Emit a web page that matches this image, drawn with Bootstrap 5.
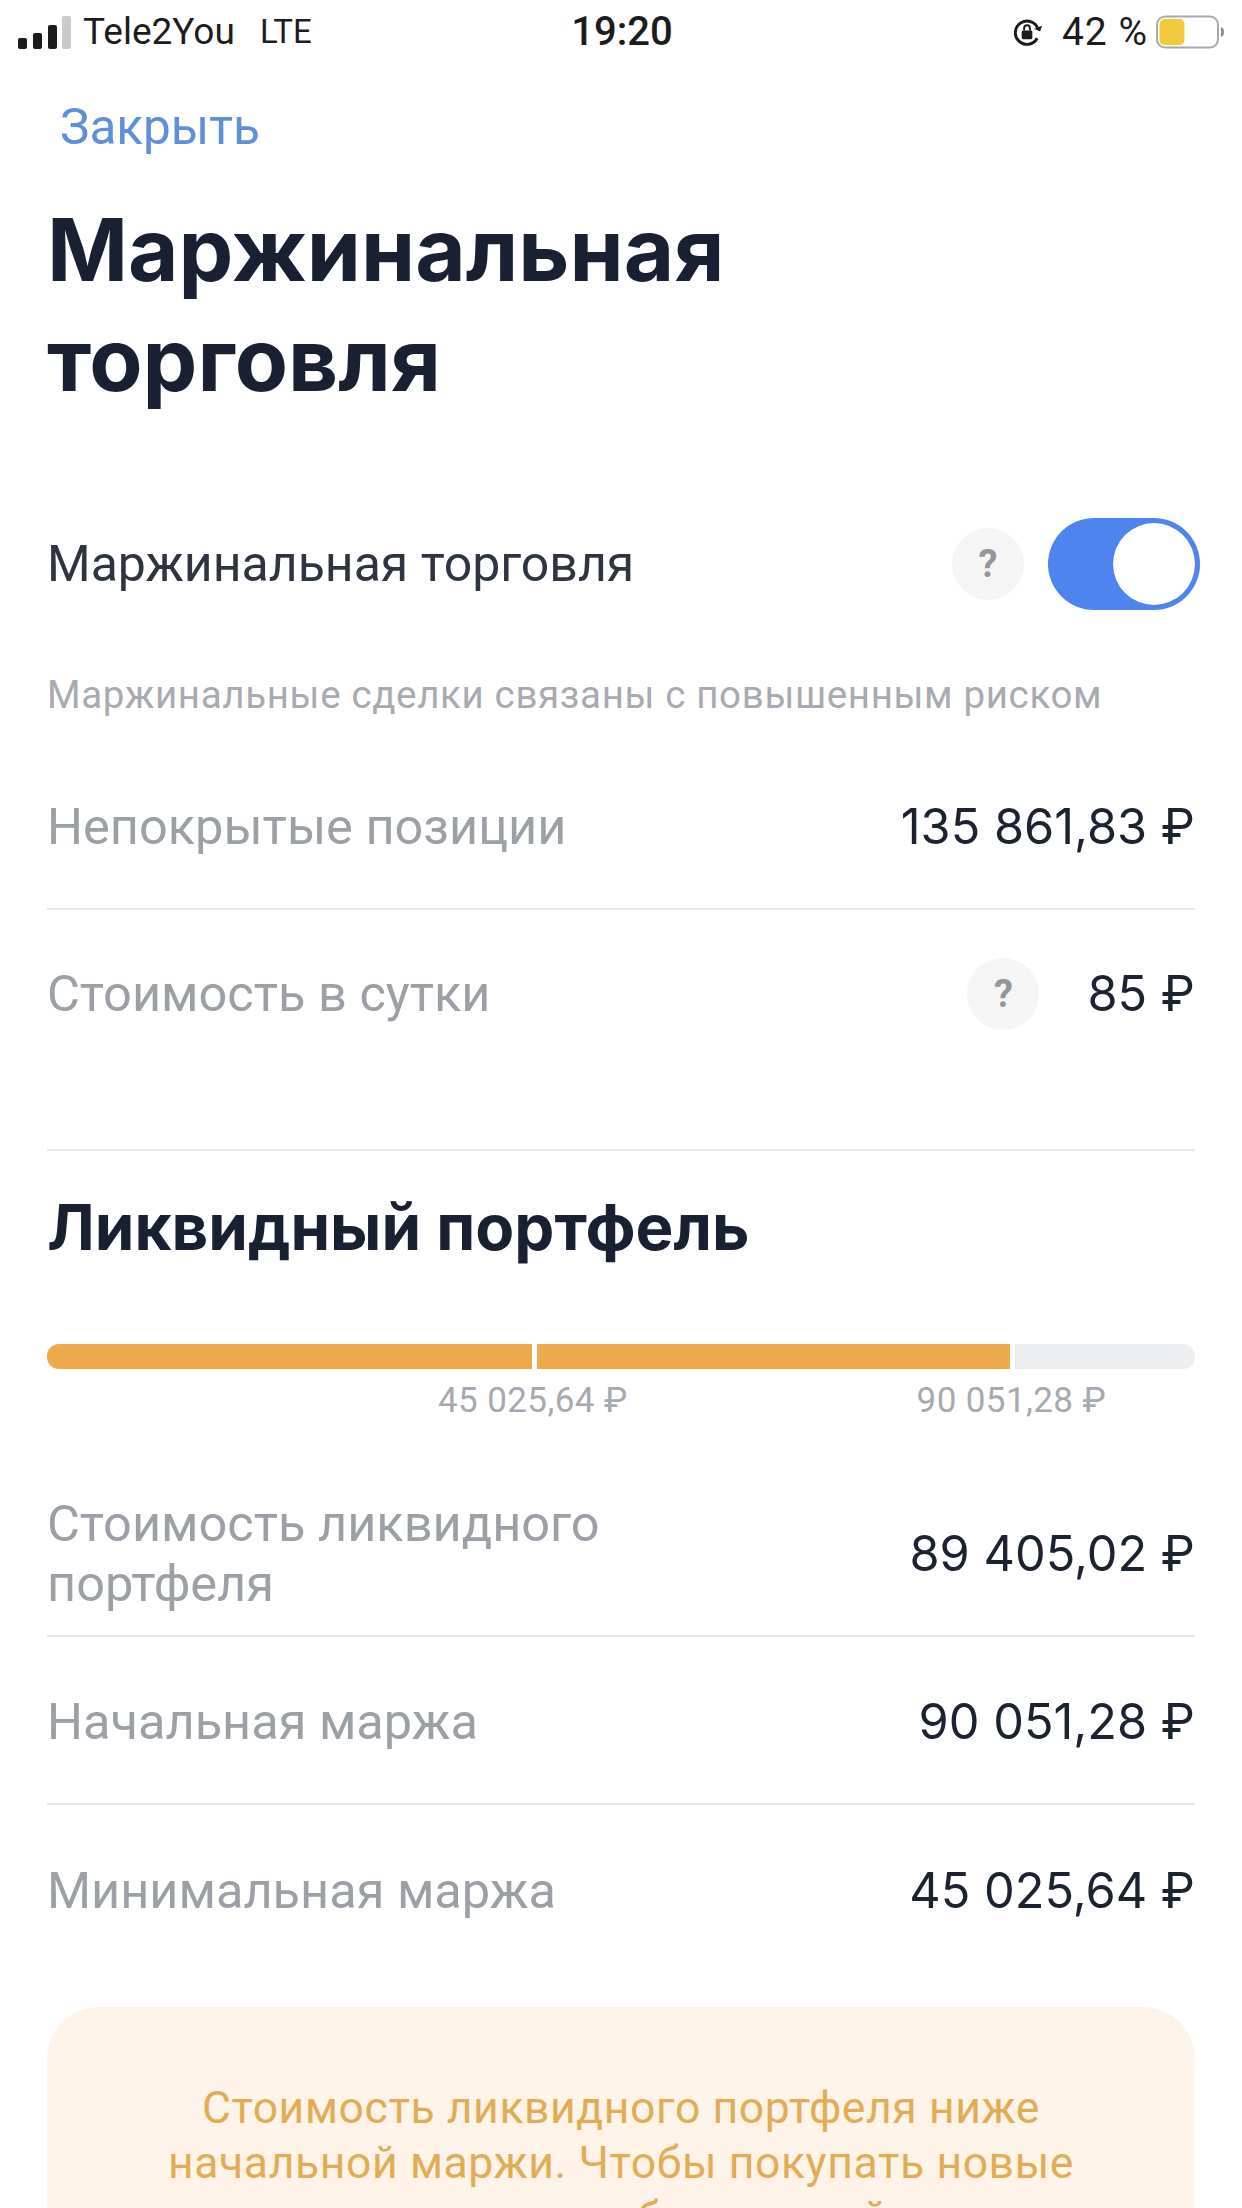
<!DOCTYPE html>
<html lang="ru">
<head>
  <meta charset="UTF-8" />
  <meta name="viewport" content="width=device-width, initial-scale=1.0"/>
  <title>Маржинальная торговля</title>
  <link href="https://cdn.jsdelivr.net/npm/bootstrap@5.3.0/dist/css/bootstrap.min.css" rel="stylesheet"/>
  <style>
    html, body { background: #fff; }
    body { font-family: Roboto, "Liberation Sans", sans-serif; color: #1b2230; }
    .screen { height: 2208px; overflow: hidden; }

    .status-bar { height: 64px; padding: 0 16px 0 18px; font-size: 37px; color: #1c1c1e; }
    .status-side { width: 420px; }
    .status-time { font-weight: 500; font-size: 40px; }
    .carrier-name { margin-left: 12px; }
    .carrier-net { margin-left: 25px; font-size: 33px; }
    .status-pct { margin-left: 19px; font-size: 39px; letter-spacing: 1px; }

    .close-link { display: block; margin: 34px 0 0 60px; font-size: 49.500px; line-height: 58px; color: #5f8fdc; text-decoration: none; }

    .page-body { padding: 0 47px; }
    .page-title { font-family: Inter, Roboto, sans-serif; font-weight: 700; font-size: 87px; line-height: 110px; margin: 39px 0 0; color: #182032; }
    .section-title { font-family: Inter, Roboto, sans-serif; font-weight: 700; font-size: 63.700px; line-height: 68px; margin: 42px 0 0; color: #182032; }

    .switch-row { height: 92px; margin-top: 103px; font-size: 50px; color: #2f3540; }
    .hint { font-size: 38.500px; line-height: 44px; color: #a7aab0; margin-top: 63px; letter-spacing: .65px; }

    .info-row { font-size: 50.500px; border-bottom: 2px solid #e6e7e9; }
    .info-row.no-line { border-bottom: 0; }
    .info-label { color: #9b9fa6; line-height: 60px; }
    .info-value { font-family: Inter, Roboto, sans-serif; font-size: 48.700px; color: #1b2230; white-space: nowrap; }
    .row-tall { height: 168px; padding-top: 4px; }
    .row-first { margin-top: 25px; }
    .row-day { height: 241px; padding-bottom: 71px; }
    .row-liquid { margin-top: 74px; padding-bottom: 21px; }

    .help-dot { width: 72px; height: 72px; border-radius: 50%; background: #f5f5f6; color: #94969b; font-weight: 700; font-size: 38px; }

    .form-switch .switch-big { width: 152px; height: 92px; margin: 0 -5px 0 24px; border: 0; float: none;
      background-color: #4f83ee;
      background-image: url("data:image/svg+xml,%3csvg xmlns='http://www.w3.org/2000/svg' viewBox='-4 -4 8 8'%3e%3ccircle r='3.56' fill='%23fff'/%3e%3c/svg%3e");
      background-size: 92px 92px; }
    .form-switch.switch-wrap { padding: 0; min-height: 0; margin: 0; }

    .level-bar { height: 25px; gap: 5px; margin-top: 83px; }
    .level-seg { background: #eea94a; }
    .level-seg.first { border-radius: 12px 0 0 12px; }
    .level-seg.rest { background: #eceef0; border-radius: 0 12px 12px 0; }

    .level-labels { margin: 13px 0 0 391px; gap: 289px; font-size: 35px; line-height: 38px; color: #a6a9af; letter-spacing: .4px; }

    .warn-box { margin-top: 34px; height: 400px; padding-top: 74px; background: #fdf3e8; border-radius: 52px 52px 0 0; color: #e2ac55; font-size: 44.500px; line-height: 55px; letter-spacing: .6px; text-align: center; }
  </style>
</head>
<body>
  <div class="screen">
    <div class="status-bar d-flex align-items-center justify-content-between">
      <div class="status-side d-flex align-items-center">
        <svg width="53" height="33" viewBox="0 0 53 33">
          <rect x="0" y="22" width="9" height="11" rx="2" fill="#1c1c1e"/>
          <rect x="15" y="17" width="9" height="16" rx="2" fill="#1c1c1e"/>
          <rect x="30" y="9" width="9" height="24" rx="2" fill="#1c1c1e"/>
          <rect x="44" y="0" width="9" height="33" rx="2" fill="#c9cacc"/>
        </svg>
        <span class="carrier-name">Tele2You</span>
        <span class="carrier-net">LTE</span>
      </div>
      <div class="status-time">19:20</div>
      <div class="status-side d-flex align-items-center justify-content-end">
        <svg width="31" height="31" viewBox="0 0 32 32" fill="none">
          <path d="M27 13a12 12 0 1 0-1 9" stroke="#1c1c1e" stroke-width="3"/>
          <path d="M23 12l6 3 2-6z" fill="#1c1c1e"/>
          <rect x="10" y="14" width="11" height="9" rx="1.500" fill="#1c1c1e"/>
          <path d="M12.500 14v-2.500a3 3 0 0 1 6 0V14" stroke="#1c1c1e" stroke-width="2"/>
        </svg>
        <span class="status-pct">42 %</span>
        <svg class="ms-2" width="70" height="34" viewBox="0 0 70 34">
          <rect x="1" y="1.500" width="61" height="31" rx="8" fill="#fff" stroke="#a9a9ab" stroke-width="2"/>
          <rect x="3.500" y="4" width="25" height="26" rx="5" fill="#f5c93c"/>
          <path d="M65 12c4 1 4 9 0 10z" fill="#8f8f92"/>
        </svg>
      </div>
    </div>

    <a class="close-link" href="#">Закрыть</a>

    <div class="page-body">
      <h1 class="page-title">Маржинальная<br>торговля</h1>

      <div class="switch-row d-flex align-items-center">
        <div class="flex-grow-1">Маржинальная торговля</div>
        <div class="help-dot d-flex align-items-center justify-content-center">?</div>
        <div class="form-check form-switch switch-wrap">
          <input class="form-check-input switch-big" type="checkbox" role="switch" checked>
        </div>
      </div>

      <div class="hint">Маржинальные сделки связаны с повышенным риском</div>

      <div class="info-row row-tall row-first d-flex align-items-center justify-content-between">
        <div class="info-label">Непокрытые позиции</div>
        <div class="info-value">135 861,83 ₽</div>
      </div>
      <div class="info-row row-day d-flex align-items-center">
        <div class="info-label flex-grow-1">Стоимость в сутки</div>
        <div class="help-dot d-flex align-items-center justify-content-center me-5">?</div>
        <div class="info-value">85 ₽</div>
      </div>

      <h2 class="section-title">Ликвидный портфель</h2>

      <div class="level-bar d-flex">
        <div class="level-seg first" style="width:485px"></div>
        <div class="level-seg" style="width:473px"></div>
        <div class="level-seg rest flex-grow-1"></div>
      </div>
      <div class="level-labels d-flex">
        <span>45 025,64 ₽</span>
        <span>90 051,28 ₽</span>
      </div>

      <div class="info-row row-liquid d-flex align-items-center justify-content-between">
        <div class="info-label">Стоимость ликвидного<br>портфеля</div>
        <div class="info-value">89 405,02 ₽</div>
      </div>
      <div class="info-row row-tall d-flex align-items-center justify-content-between">
        <div class="info-label">Начальная маржа</div>
        <div class="info-value">90 051,28 ₽</div>
      </div>
      <div class="info-row no-line row-tall d-flex align-items-center justify-content-between">
        <div class="info-label">Минимальная маржа</div>
        <div class="info-value">45 025,64 ₽</div>
      </div>

      <div class="warn-box">
        Стоимость ликвидного портфеля ниже<br>начальной маржи. Чтобы покупать новые<br>акции, пополните брокерский счет
      </div>
    </div>
  </div>
</body>
</html>
